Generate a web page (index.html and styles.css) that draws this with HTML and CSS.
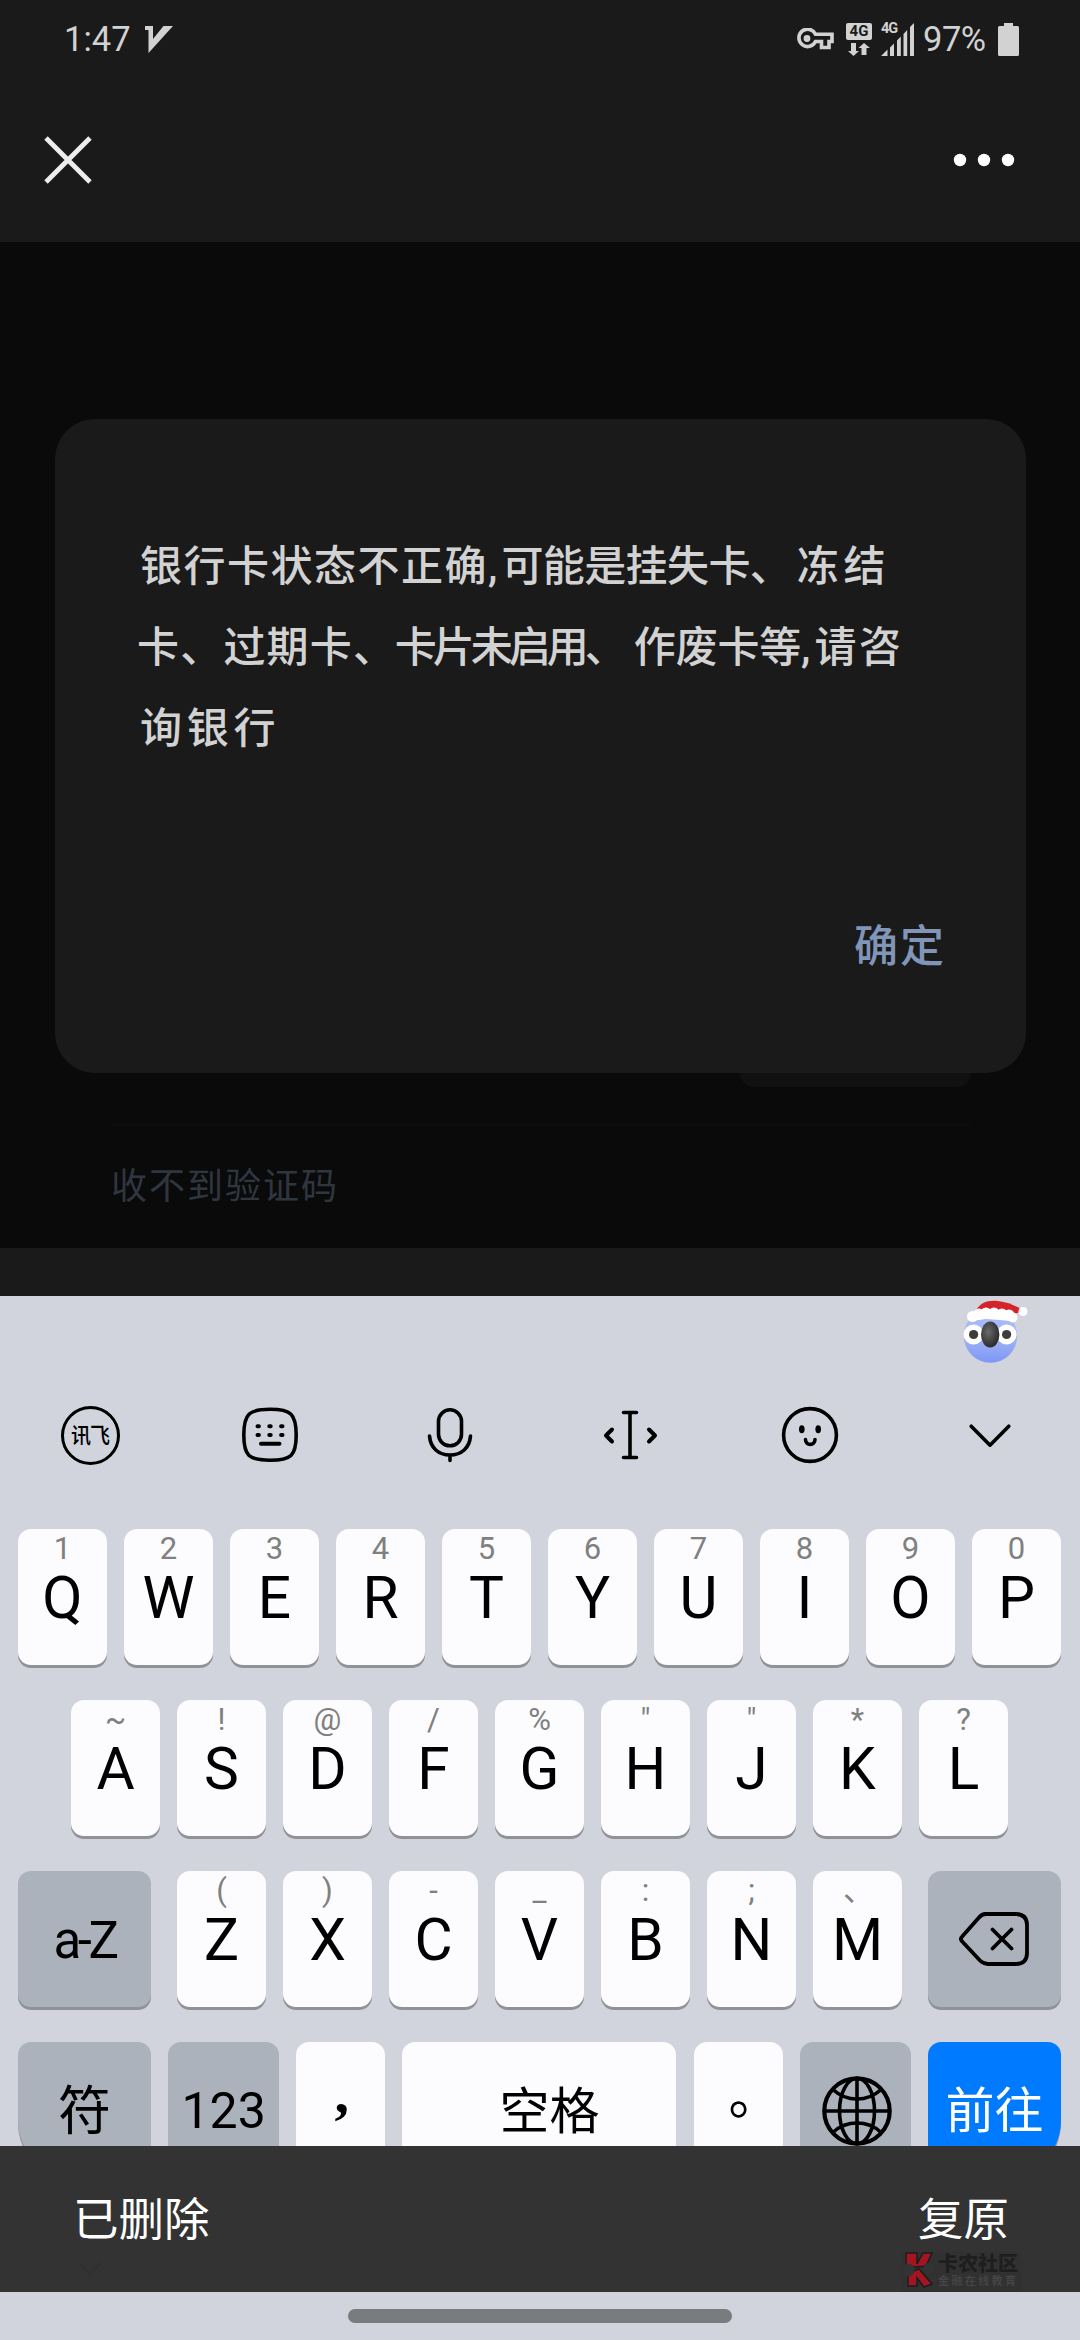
FILE: index.html
```html
<!DOCTYPE html>
<html lang="zh-CN">
<head>
<meta charset="utf-8">
<title>银行卡验证</title>
<link rel="stylesheet" href="styles.css">
</head>
<body>
<div class="screen">
  <header class="top">
    <div class="status">
      <div class="status-left">
        <span class="clock">1:47</span>
        <svg class="v-icon" width="28" height="27" viewBox="0 0 28 27"><path fill="#d2d2d2" d="M0 0h8v13L18.500 0H28L3.500 27V4H0z"/></svg>
      </div>
      <div class="status-right">
        <svg class="key-icon" width="37" height="22" viewBox="0 0 37 22"><g fill="none" stroke="#d2d2d2" stroke-width="3.600"><path d="M18.500 6.200H35v7.300h-3v6h-7.500v-6h-6A8.700 8.700 0 1 1 18.500 6.200z"/><circle cx="10" cy="10.500" r="1.600"/></g></svg>
        <div class="data">
          <span class="data-badge">4G</span>
          <svg width="22" height="13" viewBox="0 0 22 13"><path fill="#d2d2d2" d="M3 0h5v8h3l-5.500 5L0 8h3zM13.500 12h5V5H22l-6-5-5.500 5h3z"/></svg>
        </div>
        <div class="signal">
          <span class="signal-label">4G</span>
          <svg width="33" height="33" viewBox="0 0 33 33"><path fill="#d2d2d2" d="M0 33l6.500-6.500V33zM9 24.500l4-4V33H9zM16 17.500l3.800-4V33H16zM22.500 11l3.700-4V33h-3.700zM29 4l4-4v33h-4z"/></svg>
        </div>
        <span class="percent">97%</span>
        <svg width="21" height="33" viewBox="0 0 21 33"><path fill="#d2d2d2" d="M6 0h9v3h4.500A1.500 1.500 0 0 1 21 4.500v27a1.500 1.500 0 0 1-1.500 1.500h-18A1.500 1.500 0 0 1 0 31.500v-27A1.500 1.500 0 0 1 1.500 3H6z"/></svg>
      </div>
    </div>
    <nav class="titlebar">
      <svg width="48" height="48" viewBox="0 0 48 48"><path d="M2 2L46 46M46 2L2 46" stroke="#ececec" stroke-width="4.800"/></svg>
      <svg width="62" height="14" viewBox="0 0 62 14"><g fill="#fff"><circle cx="7" cy="7" r="6.200"/><circle cx="31" cy="7" r="6.200"/><circle cx="55" cy="7" r="6.200"/></g></svg>
    </nav>
  </header>

  <main class="page">
    <div class="form">
      <div class="code-button"></div>
      <div class="divider"></div>
      <a class="no-code">收不到验证码</a>
    </div>
    <div class="dialog">
      <div class="message">
        <p class="line line-1"><span class="s44">银行卡状态不正确</span><span class="s-comma">,</span><span class="s41">可能是挂失卡</span><span class="s47">、冻结</span></p>
        <p class="line line-2"><span class="s43">卡、过期卡</span><span class="s42">、</span><span class="s38">卡片未启用</span><span class="s-pause">、</span><span class="s42">作废卡等</span><span class="s-comma">,</span><span class="s45">请咨</span></p>
        <p class="line line-3"><span class="s47">询银行</span></p>
      </div>
      <a class="confirm">确定</a>
    </div>
  </main>
  <div class="strip"></div>

  <section class="keyboard">
    <div class="mascot">
      <svg width="64" height="64" viewBox="0 0 64 64">
        <defs>
          <linearGradient id="face" x1="0" y1="0" x2="0" y2="1"><stop offset="0" stop-color="#a9bcfa"/><stop offset=".5" stop-color="#a3b5f6"/><stop offset="1" stop-color="#7d97f5"/></linearGradient>
          <radialGradient id="nose" cx=".4" cy=".4" r=".6"><stop offset="0" stop-color="#6a6a6a"/><stop offset="1" stop-color="#2c2c2c"/></radialGradient>
        </defs>
        <circle cx="30.500" cy="36" r="26.700" fill="url(#face)"/>
        <path d="M15 12C20 2 28 0 38 1c9 1 16 4 23 8l-3 4-13 1z" fill="#d5232c"/>
        <g fill="#fff"><circle cx="12.500" cy="16.500" r="5.500"/><circle cx="19" cy="14" r="5.500"/><circle cx="26" cy="13" r="5.500"/><circle cx="34" cy="13" r="5.500"/><circle cx="42" cy="14" r="5.500"/><circle cx="49" cy="15" r="5.500"/><circle cx="52.500" cy="17.500" r="5"/><path d="M10 13h40v8l-10-1-14-1-15 2z"/><circle cx="63" cy="11.500" r="4.500"/></g>
        <g fill="#fff"><circle cx="13.600" cy="34.500" r="10"/><circle cx="46.600" cy="34.500" r="10"/></g>
        <circle cx="13.600" cy="34.500" r="4.600" fill="#3e3c3a"/><circle cx="46.600" cy="34.500" r="4.600" fill="#3e3c3a"/>
        <ellipse cx="30.200" cy="34.500" rx="9.200" ry="13" fill="url(#nose)"/>
      </svg>
    </div>
    <div class="tools">
      <div class="tool"><span class="ifly"><span>讯飞</span></span></div>
      <div class="tool"><svg width="60" height="60" viewBox="0 0 60 60"><g fill="none" stroke="#000" stroke-width="3.600" stroke-linecap="round"><path d="M30 4.300C51 4.300 56.200 9 56.200 30S51 55.200 30 55.200 3.800 51 3.800 30 9 4.300 30 4.300z"/><path stroke-width="4" d="M17.500 21.300h1.400M29.300 21.300h1.400M41.100 21.300h1.400M17.500 30h1.400M29.300 30h1.400M41.100 30h1.400M21 38.700h18.500"/></g></svg></div>
      <div class="tool"><svg width="60" height="60" viewBox="0 0 60 60"><g fill="none" stroke="#000" stroke-width="3.600" stroke-linecap="round"><rect x="18.500" y="4.800" width="23" height="36" rx="11.500"/><path d="M9.500 31c1 12 9 19 20.500 19s19.500-7 20.500-19M30 50v5.500"/></g></svg></div>
      <div class="tool"><svg width="60" height="60" viewBox="0 0 60 60"><g fill="none" stroke="#000" stroke-width="3.600" stroke-linecap="round" stroke-linejoin="round"><path d="M23.500 7.500h13M30 7.500v45M23.500 52.500h13"/><path stroke-width="4" d="M12 24.500l-6 6 6 6M49 24.500l6 6-6 6"/></g></svg></div>
      <div class="tool"><svg width="60" height="60" viewBox="0 0 60 60"><circle cx="30" cy="30" r="26.400" fill="none" stroke="#000" stroke-width="3.600"/><ellipse cx="21.800" cy="24.200" rx="2.800" ry="4"/><ellipse cx="38.200" cy="24.200" rx="2.800" ry="4"/><path d="M25.500 34.500c0 6.500 9.500 6.500 9.500 0" fill="none" stroke="#000" stroke-width="3.600" stroke-linecap="round"/></svg></div>
      <div class="tool"><svg width="60" height="60" viewBox="0 0 60 60"><path d="M11.200 21.200L30 40.200 48.800 21.200" fill="none" stroke="#000" stroke-width="3.600" stroke-linecap="round" stroke-linejoin="round"/></svg></div>
    </div>
    <div class="rows">
      <div class="row">
        <div class="key"><small>1</small><b>Q</b></div><div class="key"><small>2</small><b>W</b></div><div class="key"><small>3</small><b>E</b></div><div class="key"><small>4</small><b>R</b></div><div class="key"><small>5</small><b>T</b></div><div class="key"><small>6</small><b>Y</b></div><div class="key"><small>7</small><b>U</b></div><div class="key"><small>8</small><b>I</b></div><div class="key"><small>9</small><b>O</b></div><div class="key"><small>0</small><b>P</b></div>
      </div>
      <div class="row">
        <div class="key"><small>~</small><b>A</b></div><div class="key"><small>!</small><b>S</b></div><div class="key"><small>@</small><b>D</b></div><div class="key"><small>/</small><b>F</b></div><div class="key"><small>%</small><b>G</b></div><div class="key"><small>"</small><b>H</b></div><div class="key"><small>"</small><b>J</b></div><div class="key"><small>*</small><b>K</b></div><div class="key"><small>?</small><b>L</b></div>
      </div>
      <div class="row row-edges">
        <div class="key gray wide az">a-Z</div>
        <div class="group">
          <div class="key"><small>(</small><b>Z</b></div><div class="key"><small>)</small><b>X</b></div><div class="key"><small>-</small><b>C</b></div><div class="key"><small>_</small><b>V</b></div><div class="key"><small>:</small><b>B</b></div><div class="key"><small>;</small><b>N</b></div><div class="key"><small class="cjk-hint">、</small><b>M</b></div>
        </div>
        <div class="key gray wide"><svg class="backspace" width="70" height="54" viewBox="0 0 70 54"><path d="M25 2h31.500c7.500 0 11.500 4 11.500 11v28c0 7-4 11-11.500 11H29c-3.500 0-5.500-1-8-3.500L3.200 29.500c-1.600-1.600-1.600-3.400 0-5L20 5.500C21.700 3.200 23 2 27 2zM33.500 17.500l19 19M52.500 17.500l-19 19" fill="none" stroke="#000" stroke-width="3.800" stroke-linecap="round" stroke-linejoin="round"/></svg></div>
      </div>
      <div class="row row-edges">
        <div class="key gray wide sym">符</div>
        <div class="key gray mid num">123</div>
        <div class="key comma">,</div>
        <div class="key space">空格</div>
        <div class="key period">。</div>
        <div class="key gray mid"><svg class="globe" width="70" height="70" viewBox="0 0 70 70"><g fill="none" stroke="#000" stroke-width="3.600"><circle cx="35" cy="35" r="32.700" stroke-width="4.200"/><path d="M35 2v66M2 35h66"/><ellipse cx="35" cy="35" rx="17.500" ry="32.700"/><path d="M11.500 14c13 12 34 12 47 0M11.500 56c13-12 34-12 47 0"/></g></svg></div>
        <div class="key wide go">前往</div>
      </div>
    </div>
  </section>

  <div class="snackbar">
    <span>已删除</span>
    <a>复原</a>
    <svg class="ghost" width="26" height="16" viewBox="0 0 26 16"><path d="M2 2l11 11L24 2" fill="none" stroke="#303030" stroke-width="2.500"/></svg>
    <div class="mark">
      <svg width="34" height="36" viewBox="0 0 34 36"><g fill="#a31621" stroke="#1c1c1c" stroke-width="1.500"><path d="M5 1h11v11l6-11h9l-6 13c-8 1-12 1-20 1z"/><path d="M7 22c5-2 9-5 11-5l13 15-8 3-7-9v8H7z"/></g><circle cx="7" cy="18" r="6.500" fill="#333"/><circle cx="28" cy="16" r="5.500" fill="#333"/></svg>
      <div class="mark-text"><strong>卡农社区</strong><em>金融在线教育</em></div>
    </div>
  </div>
  <footer class="navbar"><div class="handle"></div></footer>
</div>
</body>
</html>
```
FILE: styles.css
```css
* { box-sizing: border-box; }

body {
  margin: 0;
  background: #1a1a1a;
  font-family: Roboto, "Noto Sans CJK SC", sans-serif;
}

svg { display: block; flex: none; }

.screen {
  width: 1080px;
  height: 2340px;
  display: flex;
  flex-direction: column;
  overflow: hidden;
}

/* Status and title bars */
.top { height: 242px; background: #1a1a1a; }

.status {
  height: 78px;
  padding: 0 61px 0 64px;
  display: flex;
  justify-content: space-between;
  align-items: center;
  color: #d2d2d2;
  font-size: 34.500px;
  line-height: 78px;
}

.status-left, .status-right { display: flex; align-items: center; }
.v-icon { margin-left: 14px; }
.key-icon { margin-right: 12px; }

.data {
  width: 26px;
  height: 33px;
  margin-right: 9px;
  display: flex;
  flex-direction: column;
  align-items: center;
  justify-content: space-between;
}

.data-badge {
  width: 26px;
  height: 17px;
  border-radius: 2px;
  background: #d2d2d2;
  color: #1a1a1a;
  font-size: 15px;
  font-weight: 700;
  line-height: 17px;
  text-align: center;
}

.signal { position: relative; margin-right: 9px; }

.signal-label {
  position: absolute;
  left: 0;
  top: -2px;
  font-size: 14.500px;
  font-weight: 700;
  line-height: 16px;
  letter-spacing: -1px;
}

.percent { width: 75px; letter-spacing: -.5px; }

.titlebar {
  height: 164px;
  padding: 0 65px 0 44px;
  display: flex;
  align-items: center;
  justify-content: space-between;
}

/* Dimmed page and dialog */
.page {
  height: 1006px;
  position: relative;
  background: #0a0a0a;
}

.form {
  height: 100%;
  padding: 0 109px 41px 112px;
  display: flex;
  flex-direction: column;
  justify-content: flex-end;
}

.code-button {
  width: 231px;
  height: 80px;
  align-self: flex-end;
  border-radius: 14px;
  background: #111;
}

.divider { height: 2px; margin-top: 37px; background: #0d0d0d; }

.no-code {
  height: 40px;
  margin: 41px 0 0 -1px;
  color: #303640;
  font-size: 36px;
  line-height: 40px;
  letter-spacing: 2px;
}

.dialog {
  position: absolute;
  left: 55px;
  top: 177px;
  width: 971px;
  height: 654px;
  padding: 107px 80px 0 85px;
  display: flex;
  flex-direction: column;
  border-radius: 40px;
  background: #1a1a1a;
}

.message { color: #d2d2d2; font-size: 42px; font-weight: 500; }
.line { height: 81px; margin: 0; line-height: 81px; white-space: nowrap; }
.line-2 { margin-left: -3px; }
.s38 { letter-spacing: -4px; }
.s41 { letter-spacing: -.6px; }
.s42 { letter-spacing: -.2px; }
.s43 { letter-spacing: 1.200px; }
.s44 { letter-spacing: 1.500px; }
.s45 { letter-spacing: 2.500px; }
.s47 { letter-spacing: 4.800px; }
.s-pause { letter-spacing: 7px; }
.s-comma { letter-spacing: 4px; }

.confirm {
  margin-top: 133px;
  align-self: flex-end;
  color: #8095b8;
  font-size: 44px;
  font-weight: 500;
  line-height: 90px;
  letter-spacing: 2px;
}

.strip { height: 48px; background: #1a1a1a; }

/* Keyboard */
.keyboard {
  height: 850px;
  overflow: hidden;
  background: #d1d4dc;
  color: #000;
}

.mascot { height: 72px; padding: 4px 0 0 960px; }
.mascot svg { overflow: visible; }

.tools { height: 134px; display: flex; }

.tool {
  width: 180px;
  display: flex;
  align-items: center;
  justify-content: center;
}

.ifly {
  width: 59px;
  height: 59px;
  display: flex;
  align-items: center;
  justify-content: center;
  border: 3.600px solid #000;
  border-radius: 50%;
  font-size: 20px;
  font-weight: 500;
  line-height: 20px;
  letter-spacing: -1px;
}

.ifly span { transform: scaleY(1.1); }

.rows {
  padding: 27px 19px 0 18px;
  display: flex;
  flex-direction: column;
  gap: 35px;
}

.row, .group { display: flex; justify-content: center; gap: 17px; }
.row-edges { justify-content: space-between; gap: 0; }

.key {
  width: 89px;
  height: 136px;
  flex: none;
  border-radius: 13px;
  background: #fcfcfe;
  box-shadow: 0 3px 0 #919298;
  text-align: center;
}

.key small {
  display: block;
  height: 39px;
  color: #808080;
  font-size: 31px;
  line-height: 39px;
}

.key b {
  display: block;
  font-size: 58.600px;
  font-weight: 400;
  line-height: 60px;
}

.cjk-hint { padding-left: 2px; }

.gray { background: #abb2bc; }
.wide { width: 133px; }
.mid { width: 111px; }
.az { font-size: 51px; line-height: 139px; letter-spacing: -3.500px; }
.sym { border-bottom-left-radius: 58px; font-size: 53px; line-height: 140px; }
.num { font-size: 50px; line-height: 138px; }
.comma { font-family: "Liberation Serif", serif; font-size: 58px; font-weight: 700; line-height: 102px; padding-left: 2px; }
.space { width: 274px; padding-left: 20px; font-size: 50px; line-height: 140px; }
.period { padding-left: 33px; font-size: 52px; line-height: 109px; }
.go { border-bottom-right-radius: 58px; background: #007aff; color: #fff; font-size: 49px; line-height: 140px; }
.backspace { margin: 41px 0 0 31px; }
.globe { margin: 34px 0 0 22px; }

/* Undo bar */
.snackbar {
  position: relative;
  height: 146px;
  padding: 0 71px 0 73px;
  display: flex;
  justify-content: space-between;
  background: #333;
  color: #fff;
  font-size: 45.500px;
  line-height: 150px;
}

.ghost { position: absolute; left: 77px; top: 115px; }

.mark {
  position: absolute;
  left: 901px;
  top: 106px;
  width: 121px;
  height: 40px;
  display: flex;
  gap: 3px;
  background: #313131;
}

.mark-text { width: 80px; display: flex; flex-direction: column; line-height: 1; }
.mark strong { margin-top: 2px; color: #1e1e1e; font-size: 20px; font-weight: 900; line-height: 20px; }
.mark em { margin-top: 2px; color: #484848; font-size: 11px; font-style: normal; font-weight: 500; line-height: 12px; letter-spacing: 2.400px; white-space: nowrap; }

.navbar {
  height: 48px;
  padding-top: 17px;
  background: #d1d4dc;
}

.handle {
  width: 384px;
  height: 14px;
  margin: 0 auto;
  border-radius: 7px;
  background: #7a7b7f;
}
```
